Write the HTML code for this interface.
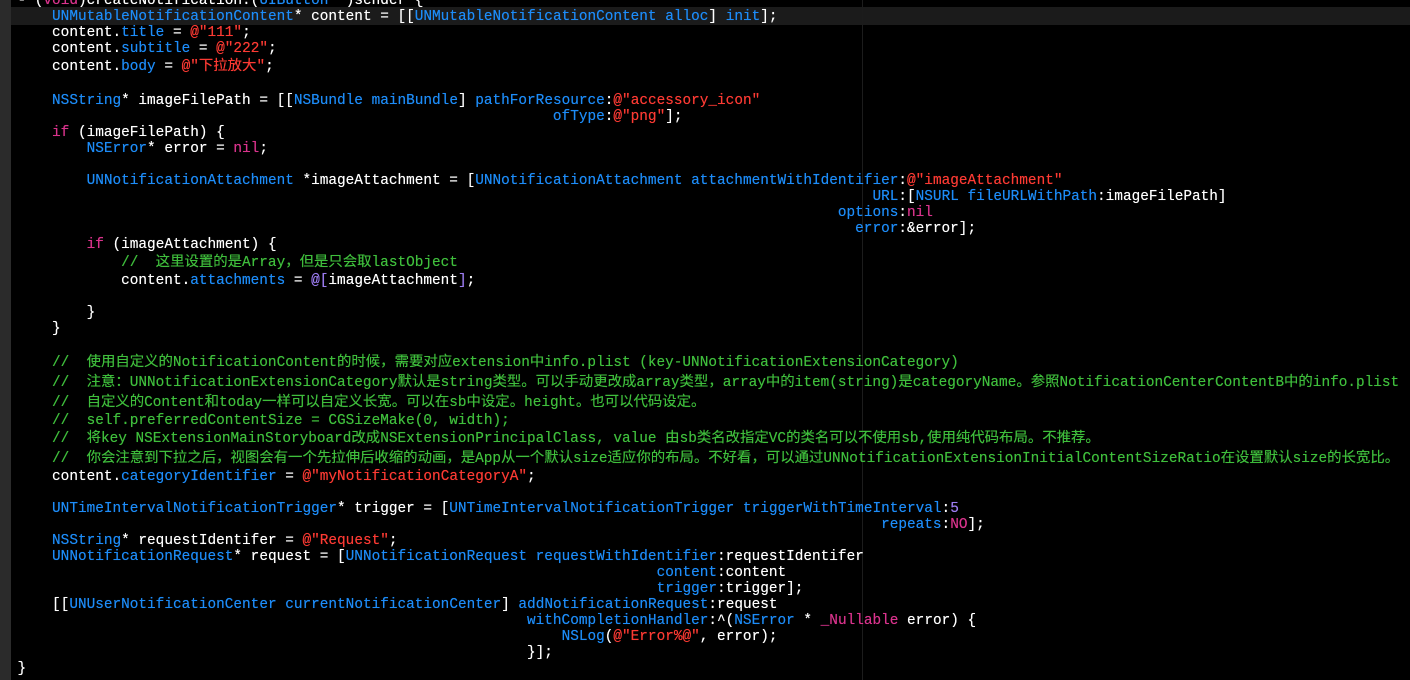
<!DOCTYPE html>
<html><head><meta charset="utf-8"><style>
html,body{margin:0;padding:0;background:#000;width:1410px;height:680px;overflow:hidden;position:relative}
.g{position:absolute;left:0;top:0;width:11px;height:680px;background:#2b2b2b}
.hl{position:absolute;left:11px;top:7px;width:1399px;height:18px;background:#1b1b1b}
.l{position:absolute;left:17.5px;height:18px;line-height:18px;white-space:pre;color:#fff;font-family:"Liberation Mono","Noto Sans CJK SC",monospace;font-size:14.4px;text-shadow:0 0 0.4px currentColor}
.t{color:#1d8cf8}.s{color:#fc3a33}.k{color:#d9338c}.c{color:#3fbe3c}.n{color:#9c7cf0}
.v{position:absolute;top:0;width:1px;height:680px;background:#1c1c1c}
</style></head><body>
<div class="g"></div><div class="hl"></div>
<div class="v" style="left:862px"></div>
<div class="l" style="top:-8px">- (<span class="k">void</span>)createNotification:(<span class="t">UIButton</span> *)sender {</div>
<div class="l" style="top:8px">    <span class="t">UNMutableNotificationContent</span>* content = [[<span class="t">UNMutableNotificationContent</span> <span class="t">alloc</span>] <span class="t">init</span>];</div>
<div class="l" style="top:24px">    content.<span class="t">title</span> = <span class="s">@"111"</span>;</div>
<div class="l" style="top:40px">    content.<span class="t">subtitle</span> = <span class="s">@"222"</span>;</div>
<div class="l" style="top:58px">    content.<span class="t">body</span> = <span class="s">@"下拉放大"</span>;</div>
<div class="l" style="top:92px">    <span class="t">NSString</span>* imageFilePath = [[<span class="t">NSBundle</span> <span class="t">mainBundle</span>] <span class="t">pathForResource</span>:<span class="s">@"accessory_icon"</span></div>
<div class="l" style="top:108px">                                                              <span class="t">ofType</span>:<span class="s">@"png"</span>];</div>
<div class="l" style="top:124px">    <span class="k">if</span> (imageFilePath) {</div>
<div class="l" style="top:140px">        <span class="t">NSError</span>* error = <span class="k">nil</span>;</div>
<div class="l" style="top:172px">        <span class="t">UNNotificationAttachment</span> *imageAttachment = [<span class="t">UNNotificationAttachment</span> <span class="t">attachmentWithIdentifier</span>:<span class="s">@"imageAttachment"</span></div>
<div class="l" style="top:188px">                                                                                                   <span class="t">URL</span>:[<span class="t">NSURL</span> <span class="t">fileURLWithPath</span>:imageFilePath]</div>
<div class="l" style="top:204px">                                                                                               <span class="t">options</span>:<span class="k">nil</span></div>
<div class="l" style="top:220px">                                                                                                 <span class="t">error</span>:&amp;error];</div>
<div class="l" style="top:236px">        <span class="k">if</span> (imageAttachment) {</div>
<div class="l" style="top:254px">            <span class="c">//  这里设置的是Array，但是只会取lastObject</span></div>
<div class="l" style="top:272px">            content.<span class="t">attachments</span> = <span class="n">@[</span>imageAttachment<span class="n">]</span>;</div>
<div class="l" style="top:304px">        }</div>
<div class="l" style="top:320px">    }</div>
<div class="l" style="top:354px">    <span class="c">//  使用自定义的NotificationContent的时候，需要对应extension中info.plist (key-UNNotificationExtensionCategory)</span></div>
<div class="l" style="top:374px">    <span class="c">//  注意：UNNotificationExtensionCategory默认是string类型。可以手动更改成array类型，array中的item(string)是categoryName。参照NotificationCenterContentB中的info.plist</span></div>
<div class="l" style="top:394px">    <span class="c">//  自定义的Content和today一样可以自定义长宽。可以在sb中设定。height。也可以代码设定。</span></div>
<div class="l" style="top:412px">    <span class="c">//  self.preferredContentSize = CGSizeMake(0, width);</span></div>
<div class="l" style="top:430px">    <span class="c">//  将key NSExtensionMainStoryboard改成NSExtensionPrincipalClass, value 由sb类名改指定VC的类名可以不使用sb,使用纯代码布局。不推荐。</span></div>
<div class="l" style="top:450px">    <span class="c">//  你会注意到下拉之后，视图会有一个先拉伸后收缩的动画，是App从一个默认size适应你的布局。不好看，可以通过UNNotificationExtensionInitialContentSizeRatio在设置默认size的长宽比。</span></div>
<div class="l" style="top:468px">    content.<span class="t">categoryIdentifier</span> = <span class="s">@"myNotificationCategoryA"</span>;</div>
<div class="l" style="top:500px">    <span class="t">UNTimeIntervalNotificationTrigger</span>* trigger = [<span class="t">UNTimeIntervalNotificationTrigger</span> <span class="t">triggerWithTimeInterval</span>:<span class="n">5</span></div>
<div class="l" style="top:516px">                                                                                                    <span class="t">repeats</span>:<span class="k">NO</span>];</div>
<div class="l" style="top:532px">    <span class="t">NSString</span>* requestIdentifer = <span class="s">@"Request"</span>;</div>
<div class="l" style="top:548px">    <span class="t">UNNotificationRequest</span>* request = [<span class="t">UNNotificationRequest</span> <span class="t">requestWithIdentifier</span>:requestIdentifer</div>
<div class="l" style="top:564px">                                                                          <span class="t">content</span>:content</div>
<div class="l" style="top:580px">                                                                          <span class="t">trigger</span>:trigger];</div>
<div class="l" style="top:596px">    [[<span class="t">UNUserNotificationCenter</span> <span class="t">currentNotificationCenter</span>] <span class="t">addNotificationRequest</span>:request</div>
<div class="l" style="top:612px">                                                           <span class="t">withCompletionHandler</span>:^(<span class="t">NSError</span> * <span class="k">_Nullable</span> error) {</div>
<div class="l" style="top:628px">                                                               <span class="t">NSLog</span>(<span class="s">@"Error%@"</span>, error);</div>
<div class="l" style="top:644px">                                                           }];</div>
<div class="l" style="top:660px">}</div>
</body></html>
